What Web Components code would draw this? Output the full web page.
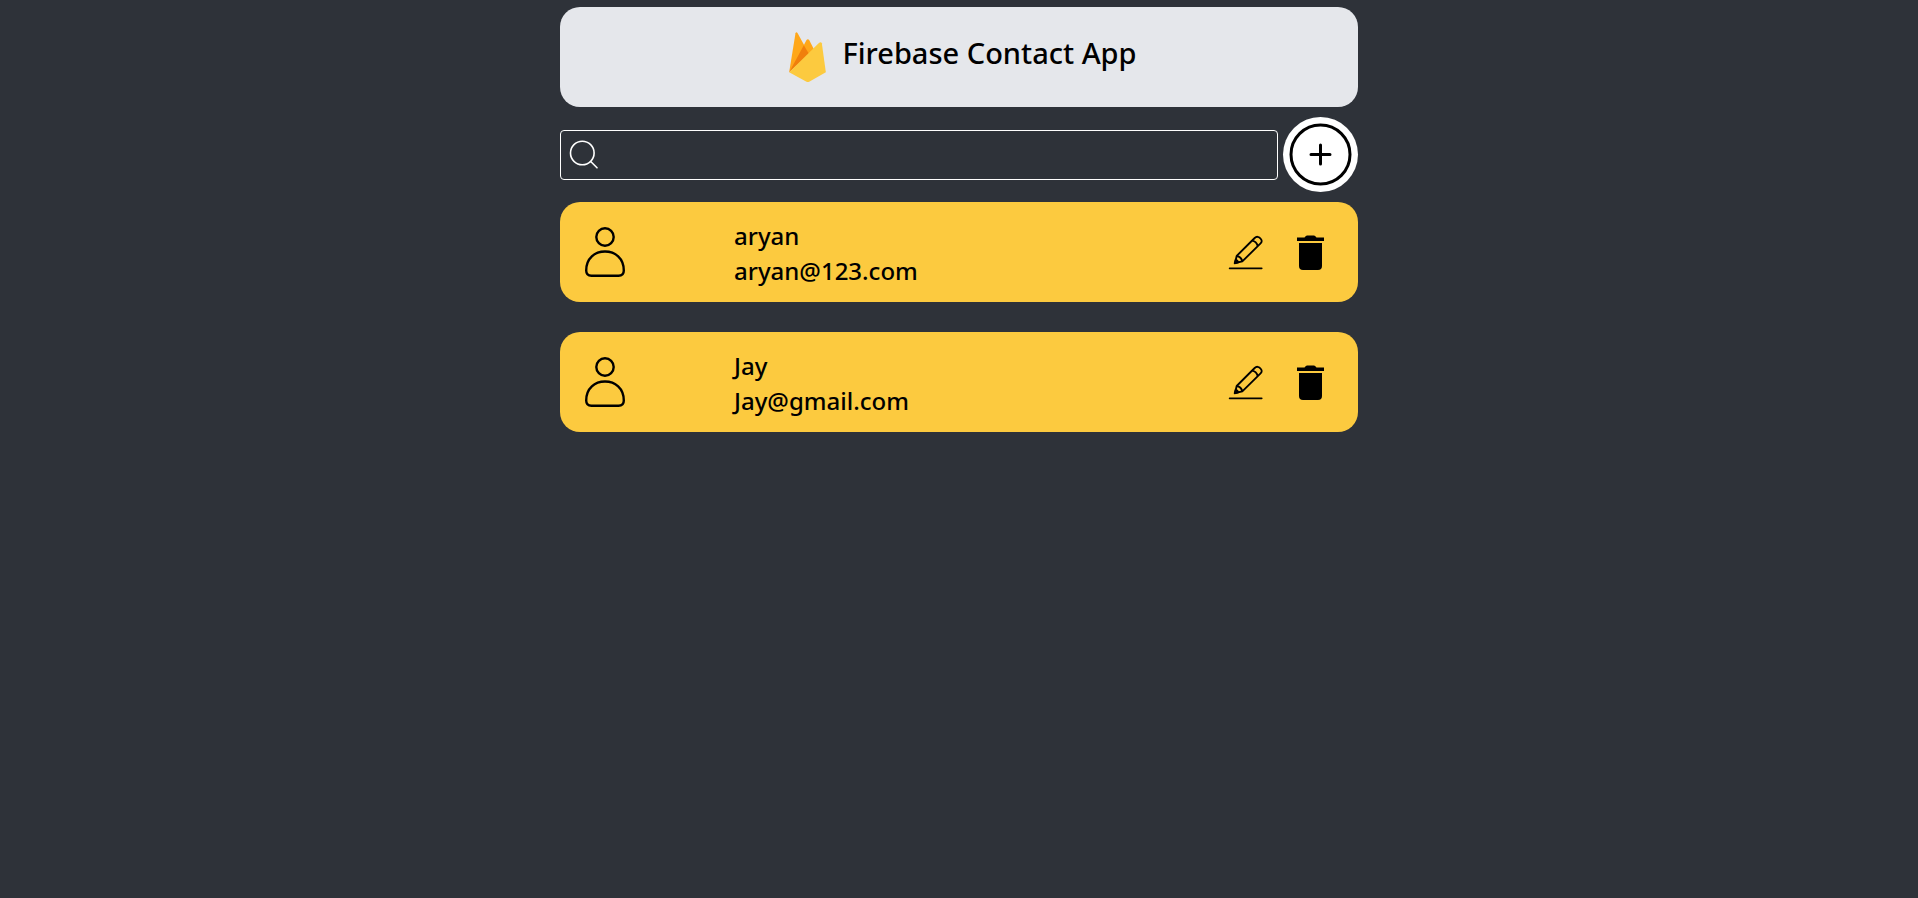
<!DOCTYPE html>
<html lang="en">
<head>
<meta charset="utf-8">
<meta name="viewport" content="width=device-width, initial-scale=1">
<title>Firebase Contact App</title>
<style>
  body { margin: 0; min-height: 100vh; background: #2e3239; color: #000; font-family: "Segoe UI", "Noto Sans", sans-serif; font-weight: 500; }
</style>
</head>
<body>
<contact-app>
  <app-header>Firebase Contact App</app-header>
  <search-bar></search-bar>
  <contact-card><span slot="name">aryan</span><span slot="email">aryan@123.com</span></contact-card>
  <contact-card><span slot="name">Jay</span><span slot="email">Jay@gmail.com</span></contact-card>
</contact-app>
<script>
  function define(name, html) {
    const template = document.createElement('template');
    template.innerHTML = html;
    customElements.define(name, class extends HTMLElement {
      constructor() {
        super();
        this.attachShadow({ mode: 'open' }).append(template.content.cloneNode(true));
      }
    });
  }

  define('contact-app', `
    <style>
      :host { display: block; padding: 7px 16px; }
      main { max-width: 798px; margin: 0 auto; }
      ::slotted(contact-card) { margin-bottom: 30px; }
    </style>
    <main><slot></slot></main>`);

  define('app-header', `
    <style>
      :host { display: block; }
      header { box-sizing: border-box; display: flex; align-items: center; justify-content: center; gap: 16px; min-height: 100px; padding-left: 8px; border-radius: 20px; background: #e5e7eb; }
      svg { width: 37px; height: 50px; }
      h1 { margin: 0 0 8px; font-size: 29px; line-height: 40px; font-weight: 500; }
    </style>
    <header>
      <svg viewBox="0 0 110 150" aria-hidden="true">
        <path d="M0 121 19 4q2-6 6-1l21 38-4 27z" fill="#ffa719"/>
        <path d="M43 41 52 24q4-5 8 0l15 29-18 20z" fill="#ffa719"/>
        <path d="M0 121 44 40 60 67z" fill="#f07f0c"/>
        <path d="M0 121 90 32q6-4 8 2l12 87-50 28q-4 2-8 0z" fill="#fcca3f"/>
      </svg>
      <h1><slot></slot></h1>
    </header>`);

  define('search-bar', `
    <style>
      :host { display: block; margin: 10px 0; }
      form { display: flex; align-items: center; gap: 5px; }
      label { box-sizing: border-box; flex: 1; min-width: 0; height: 50px; display: flex; align-items: center; gap: 8px; padding: 0 8px; border: 1px solid #fff; border-radius: 4px; }
      label svg { flex: none; width: 30px; height: 30px; }
      input { flex: 1; min-width: 0; height: 40px; padding: 0; border: 0; outline: 0; background: transparent; color: #fff; font: inherit; font-size: 20px; }
      button { flex: none; width: 75px; height: 75px; padding: 0; border: 0; border-radius: 50%; background: #fff; color: #000; cursor: pointer; }
      button svg { display: block; width: 75px; height: 75px; }
    </style>
    <form role="search">
      <label>
        <svg viewBox="0 0 30 30" fill="none" stroke="#fff" stroke-width="1.600" stroke-linecap="round" aria-hidden="true"><circle cx="13.300" cy="13" r="11.800"/><path d="m22 21.800 6 6"/></svg>
        <input type="text" aria-label="Search contacts">
      </label>
      <button type="button" aria-label="Add contact">
        <svg viewBox="0 0 75 75" fill="none" stroke="currentColor" stroke-width="3" stroke-linecap="round" aria-hidden="true"><circle cx="37.500" cy="37.500" r="29.500"/><path d="M37.500 28v19M28 37.500h19"/></svg>
      </button>
    </form>`);

  define('contact-card', `
    <style>
      :host { display: block; }
      article { display: flex; align-items: center; min-height: 100px; padding: 0 34px 0 24px; border-radius: 20px; background: #fcca3f; }
      .person { flex: none; width: 42px; height: 50px; margin-right: 108px; }
      .details { flex: 1; min-width: 0; padding-top: 2px; font-size: 24px; line-height: 35px; overflow-wrap: anywhere; }
      p { margin: 0; }
      .actions { flex: none; display: flex; align-items: center; gap: 34px; }
      button { padding: 0; border: 0; background: none; color: #000; cursor: pointer; }
      button svg { display: block; height: 35px; }
      .edit svg { width: 35px; }
      .delete svg { width: 27px; }
    </style>
    <article>
      <svg class="person" viewBox="0 0 42 50" fill="none" stroke="#000" stroke-width="2.400" aria-hidden="true">
        <circle cx="21" cy="10" r="8.700"/>
        <path d="M2.200 43.500C2.200 31 11 24.500 21 24.500s18.800 6.500 18.800 19c0 3.500-1.800 5.300-5.300 5.300h-27c-3.500 0-5.300-1.800-5.300-5.300z"/>
      </svg>
      <div class="details"><p><slot name="name"></slot></p><p><slot name="email"></slot></p></div>
      <div class="actions">
        <button class="edit" type="button" aria-label="Edit contact">
          <svg viewBox="0 0 105 105" fill="none" stroke="currentColor" stroke-width="5.500" stroke-linejoin="round" stroke-linecap="round" aria-hidden="true">
            <path d="M5 100h96M21 84 26 63 80 9c6-6 12-4 17 1s6 10 0 16L43 79zM72 17q14 3 17 16M26 63q14 3 17 16"/>
            <path d="m20 85 3-11q6 2 8 8z" fill="currentColor"/>
          </svg>
        </button>
        <button class="delete" type="button" aria-label="Delete contact">
          <svg viewBox="0 0 27 35" fill="currentColor" aria-hidden="true"><path d="M0 2.500h7.500Q9 .5 10 .5h7q1 0 2.500 2H27V6H0zM2 8h23v23q0 4-4 4H6q-4 0-4-4z"/></svg>
        </button>
      </div>
    </article>`);
</script>
</body>
</html>
